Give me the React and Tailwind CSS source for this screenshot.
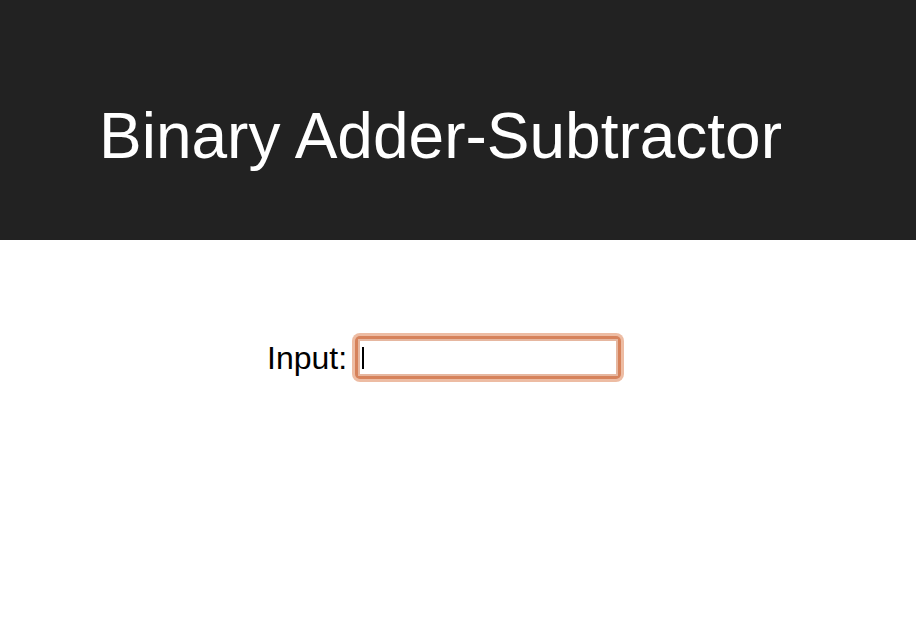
import React from 'react';

export default function App() {
  return (
    <div className="min-h-[622px] bg-white" style={{ fontFamily: '"Liberation Sans", Arial, sans-serif' }}>
      <header className="h-[240px] bg-[#222222] flex items-center pl-[99px]">
        <h1 className="text-[64px] leading-none text-white font-normal mt-[32px]">Binary Adder-Subtractor</h1>
      </header>

      <div className="flex items-center pl-[267px] pt-[93px]">
        <label className="text-[32px] leading-none text-black mr-[5px]">Input:</label>
        <div className="rounded-[8px] bg-[#edbca3] p-[3px]">
          <div className="rounded-[5px] bg-[#d6825b] p-[3px]">
            <div className="w-[260px] h-[37px] bg-white border-2 border-[#e6b7a0] flex items-center pl-[2px]">
              <span className="w-[2px] h-[22px] bg-black" />
            </div>
          </div>
        </div>
      </div>
    </div>
  );
}
